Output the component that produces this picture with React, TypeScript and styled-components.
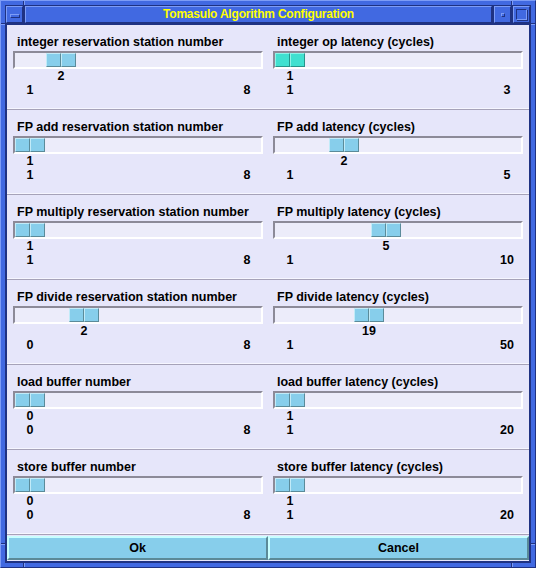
import styled, { createGlobalStyle, css } from 'styled-components';

const FRAME = '#4169e1';
const FRAME_LIGHT = '#7d9cf6';
const FRAME_DARK = '#1f3282';
const BG = '#e6e6fa';

const GlobalStyle = createGlobalStyle`
  html, body { margin: 0; padding: 0; background: #ffffff; }
  body { font-family: "Liberation Sans", Arial, sans-serif; }
`;

const Window = styled.div`
  width: 536px;
  height: 568px;
  box-sizing: border-box;
  padding: 4px;
  border: 1px solid;
  border-color: ${FRAME_LIGHT} ${FRAME_DARK} ${FRAME_DARK} ${FRAME_LIGHT};
  background-color: ${FRAME};
  background-origin: border-box;
  background-image:
    linear-gradient(to right, transparent 23px, ${FRAME_DARK} 23px 24px, ${FRAME_LIGHT} 24px 25px,
      transparent 25px 511px, ${FRAME_DARK} 511px 512px, ${FRAME_LIGHT} 512px 513px, transparent 513px),
    linear-gradient(to bottom, transparent 23px, ${FRAME_DARK} 23px 24px, ${FRAME_LIGHT} 24px 25px,
      transparent 25px 543px, ${FRAME_DARK} 543px 544px, ${FRAME_LIGHT} 544px 545px, transparent 545px);
`;

const Inner = styled.div`
  height: 100%;
  box-sizing: border-box;
  border: 1px solid ${FRAME_DARK};
  display: flex;
  flex-direction: column;
`;

const TitleRow = styled.div`
  height: 18px;
  display: flex;
  gap: 2px;
  align-items: flex-start;
  background: ${FRAME_DARK};
`;

const bevel = css`
  box-sizing: border-box;
  height: 17px;
  background: ${FRAME};
  border: 1px solid;
  border-color: ${FRAME_LIGHT} ${FRAME_DARK} ${FRAME_DARK} ${FRAME_LIGHT};
`;

const TitleButton = styled.div`
  ${bevel};
  width: 17px;
  display: flex;
  align-items: center;
  justify-content: center;
`;

const MinIcon = styled.span`
  box-sizing: border-box;
  width: 10px;
  height: 4px;
  margin-top: 3px;
  border: 1px solid;
  border-color: ${FRAME_LIGHT} ${FRAME_DARK} ${FRAME_DARK} ${FRAME_LIGHT};
`;

const DotIcon = styled.span`
  box-sizing: border-box;
  width: 4px;
  height: 4px;
  margin-top: 1px;
  border: 1px solid;
  border-color: ${FRAME_LIGHT} ${FRAME_DARK} ${FRAME_DARK} ${FRAME_LIGHT};
`;

const MaxIcon = styled.span`
  box-sizing: border-box;
  width: 11px;
  height: 11px;
  border: 1px solid;
  border-color: ${FRAME_DARK} ${FRAME_LIGHT} ${FRAME_LIGHT} ${FRAME_DARK};
  box-shadow: 1px 1px 0 ${FRAME_DARK};
`;

const Title = styled.div`
  ${bevel};
  flex: 1;
  display: flex;
  align-items: center;
  justify-content: center;
  color: #ffff00;
  font-weight: bold;
  font-size: 12px;
  letter-spacing: -0.2px;
  line-height: 15px;
`;

const Panel = styled.div`
  flex: 1;
  border: 1px solid ${FRAME_DARK};
  background: ${BG};
  display: flex;
  flex-direction: column;
  color: #000;
  font-weight: bold;
  font-size: 12.5px;
`;

const Row = styled.div`
  height: 85px;
  box-sizing: border-box;
  padding: 10px 6px 0;
  display: grid;
  grid-template-columns: 250px 250px;
  column-gap: 10px;
  border-bottom: 1px solid #a6a2b8;
  box-shadow: inset 0 -1px 0 #f6f6ff;
`;

const Cell = styled.div`
  display: flex;
  flex-direction: column;
`;

const Label = styled.div`
  height: 14px;
  line-height: 14px;
  padding-left: 4px;
  white-space: nowrap;
`;

const Trough = styled.div`
  margin-top: 2px;
  height: 18px;
  box-sizing: border-box;
  border: 2px solid;
  border-color: #8c8a98 #ffffff #ffffff #8c8a98;
  background: #ececfa;
  display: flex;
`;

const Thumb = styled.div`
  width: 30px;
  height: 14px;
  display: flex;
`;

const ThumbHalf = styled.span<{ $active: boolean }>`
  flex: 1;
  box-sizing: border-box;
  border: 1px solid;
  background: ${({ $active }) => ($active ? '#40e0d0' : '#87ceeb')};
  border-color: ${({ $active }) =>
    $active ? '#8ff3e8 #27938a #27938a #8ff3e8' : '#c2ebf8 #5b8b9a #5b8b9a #c2ebf8'};
`;

const ValueLine = styled.div`
  height: 14px;
  line-height: 14px;
  display: flex;
`;

const ValueText = styled.span`
  width: 34px;
  text-align: center;
`;

const Range = styled.div`
  height: 14px;
  line-height: 14px;
  display: flex;
  justify-content: space-between;
  padding: 0 6px 0 7px;
`;

const RangeNum = styled.span`
  width: 20px;
  text-align: center;
`;

const ButtonBar = styled.div`
  flex: 1;
  display: flex;
  padding: 1px 0;
`;

const Button = styled.button`
  flex: 1;
  height: 24px;
  box-sizing: border-box;
  margin: 0;
  padding: 0;
  border: 2px solid;
  border-color: #c8ffff #5b8a98 #5b8a98 #c8ffff;
  background: #87ceeb;
  font-family: "Liberation Sans", Arial, sans-serif;
  font-weight: bold;
  font-size: 12.5px;
  color: #000;
  cursor: pointer;
`;

type Scale = { label: string; min: number; max: number; value: number; active?: boolean };

const rows: [Scale, Scale][] = [
  [
    { label: 'integer reservation station number', min: 1, max: 8, value: 2 },
    { label: 'integer op latency (cycles)', min: 1, max: 3, value: 1, active: true },
  ],
  [
    { label: 'FP add reservation station number', min: 1, max: 8, value: 1 },
    { label: 'FP add latency (cycles)', min: 1, max: 5, value: 2 },
  ],
  [
    { label: 'FP multiply reservation station number', min: 1, max: 8, value: 1 },
    { label: 'FP multiply latency (cycles)', min: 1, max: 10, value: 5 },
  ],
  [
    { label: 'FP divide reservation station number', min: 0, max: 8, value: 2 },
    { label: 'FP divide latency (cycles)', min: 1, max: 50, value: 19 },
  ],
  [
    { label: 'load buffer number', min: 0, max: 8, value: 0 },
    { label: 'load buffer latency (cycles)', min: 1, max: 20, value: 1 },
  ],
  [
    { label: 'store buffer number', min: 0, max: 8, value: 0 },
    { label: 'store buffer latency (cycles)', min: 1, max: 20, value: 1 },
  ],
];

const TRAVEL = 216;

function ScaleCell({ s }: { s: Scale }) {
  const offset = Math.round(((s.value - s.min) / (s.max - s.min)) * TRAVEL);
  return (
    <Cell>
      <Label>{s.label}</Label>
      <Trough>
        <Thumb style={{ marginLeft: offset }}>
          <ThumbHalf $active={!!s.active} />
          <ThumbHalf $active={!!s.active} />
        </Thumb>
      </Trough>
      <ValueLine>
        <ValueText style={{ marginLeft: offset }}>{s.value}</ValueText>
      </ValueLine>
      <Range>
        <RangeNum>{s.min}</RangeNum>
        <RangeNum>{s.max}</RangeNum>
      </Range>
    </Cell>
  );
}

export default function App() {
  return (
    <>
      <GlobalStyle />
      <Window>
        <Inner>
          <TitleRow>
            <TitleButton><MinIcon /></TitleButton>
            <Title>Tomasulo Algorithm Configuration</Title>
            <TitleButton><DotIcon /></TitleButton>
            <TitleButton><MaxIcon /></TitleButton>
          </TitleRow>
          <Panel>
            {rows.map(([a, b]) => (
              <Row key={a.label}>
                <ScaleCell s={a} />
                <ScaleCell s={b} />
              </Row>
            ))}
            <ButtonBar>
              <Button>Ok</Button>
              <Button>Cancel</Button>
            </ButtonBar>
          </Panel>
        </Inner>
      </Window>
    </>
  );
}
